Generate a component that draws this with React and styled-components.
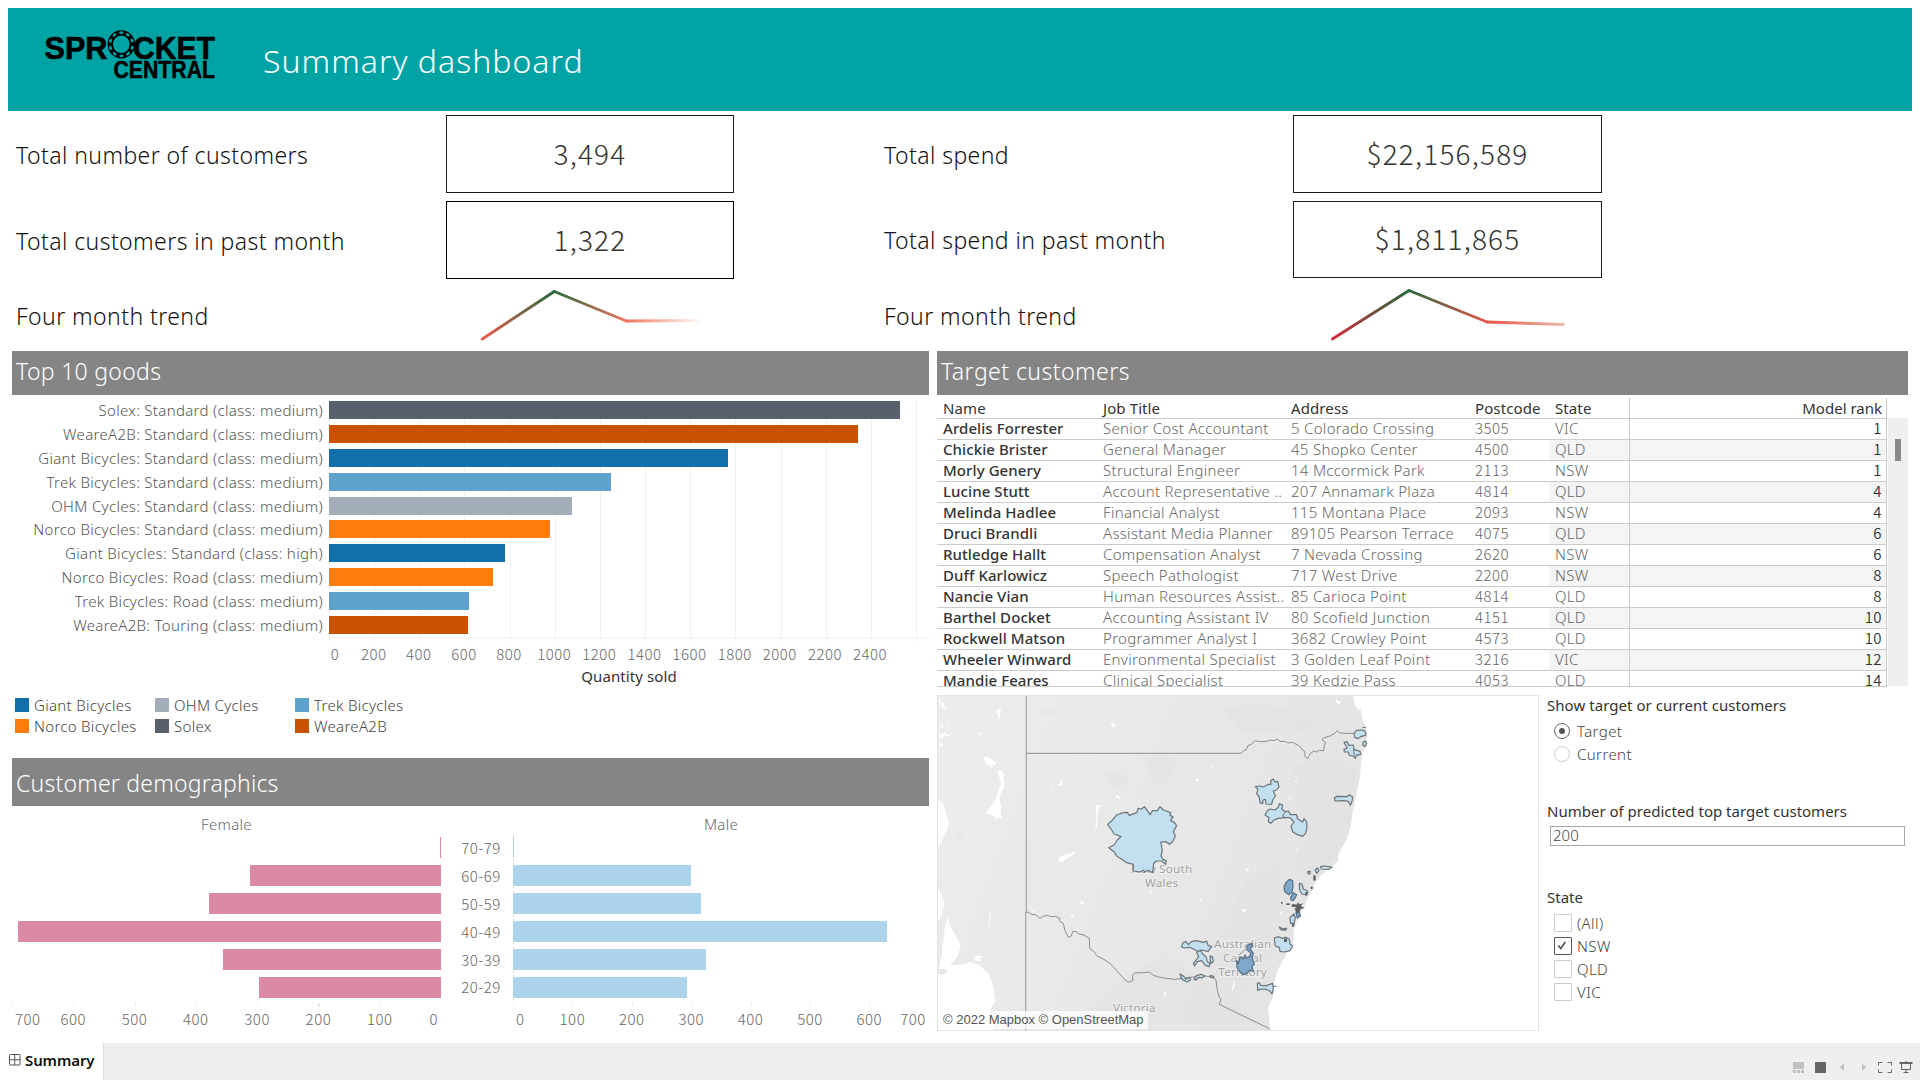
import React from "react";
import styled, { createGlobalStyle } from "styled-components";

const TEXT = `"Noto Sans", "Open Sans", sans-serif`;
const NUM = `"Noto Sans CJK SC", "Noto Sans", sans-serif`;

const GlobalStyle = createGlobalStyle`
  * { box-sizing: border-box; }
  body { margin: 0; background: #fff; font-family: ${TEXT}; }
`;

const Page = styled.div`
  width: 1920px;
  height: 1080px;
  overflow: hidden;
  display: flex;
  flex-direction: column;
  background: #fff;
  font-size: 15px;
  white-space: nowrap;
`;

/* ---------- header ---------- */
const Header = styled.header`
  margin: 8px 8px 0;
  height: 103px;
  flex: none;
  padding-left: 34px;
  display: flex;
  background: #00a3a3;
`;
const LogoSvg = styled.svg`
  width: 180px;
  height: 60px;
  margin-top: 17px;
`;
const Title = styled.h1`
  margin: 30px 0 0 41px;
  font-size: 32px;
  line-height: 46px;
  font-weight: 310;
  letter-spacing: 1px;
  color: #fff;
`;

/* ---------- headline figures ---------- */
const Kpis = styled.section`
  height: 240px;
  flex: none;
  display: flex;
  padding: 4px 0 0 15px;
`;
const KpiGroup = styled.div`
  width: 868px;
  display: grid;
  grid-template-columns: ${p => p.$label}px ${p => p.$box}px;
  grid-template-rows: 78px ${p => p.$second}px 66px;
  row-gap: 8px;
  align-content: start;
`;
const KpiLabel = styled.div`
  align-self: center;
  font-size: 23px;
  line-height: 32px;
  font-weight: 310;
  letter-spacing: 0.42px;
  color: #111;
  padding: ${p => (p.$lift ? 0 : 1)}px 0 ${p => p.$lift || 0}px 1px;
`;
const KpiBox = styled.div`
  border: 1px solid ${p => p.$line};
  display: flex;
  align-items: center;
  justify-content: center;
  padding-bottom: 3px;
  font-family: ${NUM};
  font-size: 28px;
  font-weight: 300;
  letter-spacing: 1.2px;
  line-height: 40px;
  color: #333;
`;
const TrendSvg = styled.svg`
  width: 310px;
  height: 66px;
`;

/* ---------- body ---------- */
const Body = styled.main`
  display: flex;
  gap: 8px;
  padding-left: 12px;
  height: 692px;
  flex: none;
`;
const Left = styled.div`
  width: 917px;
  display: flex;
  flex-direction: column;
`;
const Right = styled.div`
  width: 971px;
  display: flex;
  flex-direction: column;
`;
const SectionBar = styled.h2`
  margin: 0;
  height: ${p => p.$h}px;
  flex: none;
  padding: ${p => p.$drop || 0}px 4px ${p => p.$lift || 0}px;
  display: flex;
  align-items: center;
  background: #858585;
  color: #fff;
  font-size: 23px;
  font-weight: 300;
  letter-spacing: ${p => p.$ls || 0.3}px;
`;

/* goods chart */
const Goods = styled.div`
  display: flex;
  height: 247px;
  padding-top: 3px;
`;
const GoodsLabels = styled.div`
  width: 317px;
  padding: 0 6px 0 0;
`;
const GoodsLabel = styled.div`
  height: 23.88px;
  line-height: 24px;
  text-align: right;
  font-weight: 320;
  letter-spacing: 0.32px;
  color: #555;
`;
const GoodsPlot = styled.div`
  width: 600px;
  height: 244px;
  background: repeating-linear-gradient(90deg, #f1f1f1 0 1px, transparent 1px 45.15px);
`;
const GoodsBars = styled.div`
  height: 240px;
  padding-top: 3px;
  border-bottom: 1px solid #f1f1f1;
`;
const GoodsSlot = styled.div`
  height: 23.88px;
`;
const GoodsBar = styled.div`
  height: 18px;
  background: ${p => p.$c};
`;
const GoodsAxis = styled.div`
  display: flex;
  margin-left: 294px;
  height: 24px;
`;
const axisText = `
  font-family: ${NUM};
  font-size: 15px;
  font-weight: 320;
  letter-spacing: 0.5px;
  color: #666;
`;
const GoodsTick = styled.span`
  ${axisText}
  width: 45.13px;
  line-height: 23px;
  text-align: center;
  &:first-child { padding-left: 13px; }
`;
const AxisTitle = styled.div`
  margin: 0 0 0 317px;
  text-align: center;
  line-height: 20px;
  letter-spacing: 0.1px;
  color: #333;
`;
const Legend = styled.div`
  display: grid;
  grid-template-columns: 140px 140px 140px;
  grid-auto-rows: 21px;
  padding: 8px 0 0 3px;
  height: 72px;
`;
const LegendItem = styled.div`
  display: flex;
  align-items: center;
  gap: 5px;
  font-weight: 320;
  letter-spacing: 0.3px;
  color: #444;
  line-height: 20px;
`;
const Swatch = styled.i`
  width: 14px;
  height: 14px;
  background: ${p => p.$c};
`;

/* demographics */
const Demo = styled.div`
  display: grid;
  grid-template-columns: 429px 72px 416px;
  grid-template-rows: 27px 169px 6px 26px;
`;
const DemoHead = styled.div`
  text-align: center;
  line-height: 37px;
  font-weight: 320;
  letter-spacing: 0.3px;
  color: #666;
`;
const DemoBars = styled.div`
  display: flex;
  flex-direction: column;
  padding-top: 4px;
  gap: 7px;
  align-items: ${p => (p.$side === "left" ? "flex-end" : "flex-start")};
  background: ${p =>
    p.$side === "left"
      ? "none"
      : "repeating-linear-gradient(180deg, #ccc 0 1px, transparent 1px 4px) 0 2px / 1px 100% no-repeat"};
`;
const DemoBar = styled.div`
  height: 21px;
  background: ${p => (p.$side === "left" ? "#da8aa7" : "#aed3ec")};
`;
const Ages = styled.div`
  padding-top: 2px;
`;
const Age = styled.div`
  ${axisText}
  height: 27.9px;
  line-height: 26px;
  padding-left: 8px;
  text-align: center;
`;
const DemoTicks = styled.div`
  height: 4px;
  margin-top: 1px;
  background: repeating-linear-gradient(90deg, #ececec 0 1px, transparent 1px ${p => p.$pitch}px);
`;
const DemoAxis = styled.div`
  display: flex;
`;
const DemoTick = styled.span`
  ${axisText}
  width: ${p => p.$pitch}px;
  line-height: 21px;
  text-align: center;
  &:first-child { width: ${p => p.$pitch / 2}px; text-align: left; padding-left: 3px; }
  &:last-child { width: ${p => p.$pitch / 2}px; text-align: right; padding-right: 3px; direction: rtl; }
`;

/* customers table */
const TableWrap = styled.div`
  display: flex;
  height: 292px;
  padding-top: 3px;
  flex: none;
`;
const Table = styled.div`
  width: 950px;
  height: 289px;
  overflow: hidden;
  border-right: 1px solid #cbcbcb;
  border-bottom: 1px solid #cbcbcb;
`;
const TableRow = styled.div`
  display: grid;
  grid-template-columns: 160px 188px 184px 80px 80px 1fr;
  height: 21px;
  border-bottom: 1px solid #cbcbcb;
  line-height: 18px;
`;
const HeadRow = styled(TableRow)`
  line-height: 20px;
`;
const Cell = styled.div`
  padding-left: 6px;
  font-weight: 320;
  letter-spacing: 0.3px;
  color: #666;
  overflow: hidden;
  background: ${p => (p.$shade ? "#f4f4f4" : "none")};
`;
const NameCell = styled(Cell)`
  font-weight: 490;
  color: #333;
  letter-spacing: 0.08px;
`;
const CodeCell = styled(Cell)`
  font-family: ${NUM};
  letter-spacing: 0.5px;
`;
const RankCell = styled(Cell)`
  font-family: ${p => (p.$head ? TEXT : NUM)};
  font-weight: ${p => (p.$head ? 400 : 340)};
  letter-spacing: ${p => (p.$head ? 0 : 0.4)}px;
  border-left: 1px solid #cbcbcb;
  padding-right: 4px;
  text-align: right;
  color: #333;
`;
const HeadCell = styled(Cell)`
  font-weight: 400;
  letter-spacing: 0.1px;
  color: #333;
`;
const Scroll = styled.div`
  width: 20px;
  height: 268px;
  margin: 20px 0 0 1px;
  padding: 21px 7px 0;
  background: #efefef;
`;
const Thumb = styled.div`
  height: 22px;
  width: 6px;
  background: #888;
`;

/* map + filters */
const Lower = styled.div`
  display: flex;
  padding-top: 8px;
`;
const MapFrame = styled.div`
  position: relative;
  width: 602px;
  height: 336px;
  border: 1px solid #e3e3e3;
  overflow: hidden;
`;
const MapSvg = styled.svg`
  display: block;
  margin: -1px;
`;
const Attribution = styled.div`
  position: absolute;
  left: 2px;
  bottom: 1px;
  width: 208px;
  height: 18px;
  padding-left: 3px;
  background: rgba(255, 255, 255, 0.75);
  font: 13px/18px "Liberation Sans", Arial, sans-serif;
  letter-spacing: 0;
  color: #555;
`;
const Filters = styled.div`
  width: 369px;
  padding-left: 8px;
`;
const FilterTitle = styled.div`
  line-height: 20px;
  letter-spacing: ${p => p.$ls || 0}px;
  color: #333;
  margin-top: ${p => p.$top}px;
`;
const Option = styled.label`
  display: flex;
  align-items: center;
  gap: 5px;
  height: 23px;
  padding-left: 7px;
  font-weight: 320;
  letter-spacing: 0.4px;
  color: #444;
`;
const Radio = styled.span`
  width: 16px;
  height: 16px;
  margin-right: 2px;
  border: 1px solid ${p => (p.$on ? "#666" : "#ccc")};
  border-radius: 50%;
  display: flex;
  align-items: center;
  justify-content: center;
  &::after {
    content: "";
    width: 6px;
    height: 6px;
    border-radius: 50%;
    background: ${p => (p.$on ? "#555" : "transparent")};
  }
`;
const Check = styled.span`
  width: 18px;
  height: 18px;
  border: 1px solid ${p => (p.$on ? "#555" : "#ccc")};
  border-radius: 1px;
  display: flex;
`;
const OptionList = styled.div`
  padding-top: 4px;
`;
const Field = styled.div`
  width: 355px;
  height: 20px;
  margin: 5px 0 0 3px;
  padding-left: 2px;
  border: 1px solid #a6a6a6;
  font-weight: 320;
  line-height: 17px;
  color: #444;
`;

/* tab strip */
const Footer = styled.footer`
  height: 37px;
  flex: none;
  display: flex;
  justify-content: space-between;
  background: #efefef;
`;
const Tab = styled.div`
  width: 104px;
  background: #fff;
  border-right: 1px solid #dcdcdc;
  display: flex;
  gap: 4px;
  padding: 0 0 3px 9px;
  align-items: center;
  font-weight: 640;
  font-size: 15px;
  letter-spacing: -0.1px;
  line-height: 18px;
  color: #111;
`;
const FooterIcons = styled.svg`
  width: 130px;
  height: 37px;
`;

/* ---------- data ---------- */
const C = {
  giant: "#1170aa", norco: "#fc7d0b", ohm: "#a3acb9",
  solex: "#57606c", trek: "#5fa2ce", weare: "#c85200",
};
const goods = [
  ["Solex: Standard (class: medium)", 571, C.solex],
  ["WeareA2B: Standard (class: medium)", 529, C.weare],
  ["Giant Bicycles: Standard (class: medium)", 399, C.giant],
  ["Trek Bicycles: Standard (class: medium)", 282, C.trek],
  ["OHM Cycles: Standard (class: medium)", 243, C.ohm],
  ["Norco Bicycles: Standard (class: medium)", 221, C.norco],
  ["Giant Bicycles: Standard (class: high)", 176, C.giant],
  ["Norco Bicycles: Road (class: medium)", 164, C.norco],
  ["Trek Bicycles: Road (class: medium)", 140, C.trek],
  ["WeareA2B: Touring (class: medium)", 139, C.weare],
];
const legend = [
  ["Giant Bicycles", C.giant], ["OHM Cycles", C.ohm], ["Trek Bicycles", C.trek],
  ["Norco Bicycles", C.norco], ["Solex", C.solex], ["WeareA2B", C.weare],
];
const ages = [
  ["70-79", 1, 1], ["60-69", 191, 178], ["50-59", 232, 188],
  ["40-49", 423, 374], ["30-39", 218, 193], ["20-29", 182, 174],
];
const customers = [
  ["Ardelis Forrester", "Senior Cost Accountant", "5 Colorado Crossing", "3505", "VIC", 1],
  ["Chickie Brister", "General Manager", "45 Shopko Center", "4500", "QLD", 1],
  ["Morly Genery", "Structural Engineer", "14 Mccormick Park", "2113", "NSW", 1],
  ["Lucine Stutt", "Account Representative ..", "207 Annamark Plaza", "4814", "QLD", 4],
  ["Melinda Hadlee", "Financial Analyst", "115 Montana Place", "2093", "NSW", 4],
  ["Druci Brandli", "Assistant Media Planner", "89105 Pearson Terrace", "4075", "QLD", 6],
  ["Rutledge Hallt", "Compensation Analyst", "7 Nevada Crossing", "2620", "NSW", 6],
  ["Duff Karlowicz", "Speech Pathologist", "717 West Drive", "2200", "NSW", 8],
  ["Nancie Vian", "Human Resources Assist..", "85 Carioca Point", "4814", "QLD", 8],
  ["Barthel Docket", "Accounting Assistant IV", "80 Scofield Junction", "4151", "QLD", 10],
  ["Rockwell Matson", "Programmer Analyst I", "3682 Crowley Point", "4573", "QLD", 10],
  ["Wheeler Winward", "Environmental Specialist", "3 Golden Leaf Point", "3216", "VIC", 12],
  ["Mandie Feares", "Clinical Specialist", "39 Kedzie Pass", "4053", "QLD", 14],
];

/* ---------- drawings ---------- */
function Logo() {
  const n = 10;
  const at = (i, r) => {
    const a = (i / n) * Math.PI * 2 + 0.3;
    return [79.3 + Math.cos(a) * r, 19.3 + Math.sin(a) * r * 1.03];
  };
  const idx = Array.from({ length: n }, (_, i) => i);
  return (
    <LogoSvg viewBox="0 0 180 60" fontFamily="Liberation Sans, Arial, sans-serif" fontWeight="bold">
      <text x="2.5" y="33.5" fontSize="31" textLength="63" lengthAdjust="spacingAndGlyphs" stroke="#000" strokeWidth=".6">SPR</text>
      <text x="91" y="33.5" fontSize="31" textLength="82" lengthAdjust="spacingAndGlyphs" stroke="#000" strokeWidth=".6">CKET</text>
      <text x="71.5" y="52.5" fontSize="23.5" textLength="101.5" lengthAdjust="spacingAndGlyphs" stroke="#000" strokeWidth=".5">CENTRAL</text>
      <ellipse cx="79.3" cy="19.3" rx="11" ry="11.4" fill="none" stroke="#000" strokeWidth="5.4" />
      {idx.map(i => {
        const [x, y] = at(i, 11.3);
        return (
          <ellipse key={i} cx={x} cy={y} rx="1.4" ry="2.1" fill="#00a3a3"
            transform={`rotate(${(i / n) * 360 + 17} ${x} ${y})`} />
        );
      })}
    </LogoSvg>
  );
}

function Trend({ id, points, colors }) {
  return (
    <TrendSvg viewBox="0 0 310 66">
      <defs>
        {[0, 1, 2].map(i => (
          <linearGradient key={i} id={id + i} gradientUnits="userSpaceOnUse"
            x1={points[i][0]} y1={points[i][1]} x2={points[i + 1][0]} y2={points[i + 1][1]}>
            <stop offset="0" stopColor={colors[i]} />
            <stop offset="1" stopColor={colors[i + 1]} />
          </linearGradient>
        ))}
      </defs>
      {[0, 1, 2].map(i => (
        <line key={i} x1={points[i][0]} y1={points[i][1]} x2={points[i + 1][0]} y2={points[i + 1][1]}
          stroke={`url(#${id + i})`} strokeWidth="2.9" strokeLinecap={i === 2 ? "butt" : "round"} />
      ))}
    </TrendSvg>
  );
}

const lightRegions = [
  "533,403 548,390 560,375 580,368 592,367 598,376 620,368 625,355 635,357 643,350 652,362 660,374 668,362 682,362 690,350 700,360 722,368 720,376 729,380 722,392 733,397 740,407 730,425 736,437 728,455 718,463 708,455 692,456 697,480 693,498 699,508 708,512 707,523 695,513 680,513 671,520 668,548 655,541 645,546 640,541 630,546 610,543 610,523 590,518 575,508 560,498 552,485 536,473 552,465 562,450 573,440 553,432 545,420",
  "976,290 990,288 1000,291 1015,283 1023,283 1022,272 1030,267 1035,276 1043,274 1047,290 1040,300 1030,303 1036,318 1028,330 1025,343 1008,342 1006,328 999,330 998,341 990,338 988,322 980,310 984,298",
  "1005,375 1012,362 1020,357 1035,360 1045,352 1048,341 1058,345 1055,358 1066,365 1075,363 1082,374 1100,374 1102,386 1118,396 1122,386 1130,396 1131,412 1127,430 1118,439 1100,433 1088,425 1083,408 1092,396 1080,383 1062,383 1045,385 1032,390 1022,400 1015,395 1017,383",
  "1272,130 1280,121 1300,120 1308,128 1306,136 1292,140 1285,146 1274,142",
  "1299,157 1305,153 1310,160 1306,169 1299,166",
  "1242,157 1252,155 1256,166 1270,165 1272,178 1290,184 1292,193 1280,196 1276,205 1270,198 1258,196 1255,186 1243,186 1242,178 1252,174",
  "1213,324 1220,319 1250,320 1258,314 1268,322 1266,334 1261,346 1255,334 1240,332 1216,333",
  "1172,530 1182,528 1207,531 1196,538 1174,537",
  "1155,540 1163,534 1167,542 1160,550",
  "1133,545 1141,544 1139,553 1133,550",
  "1108,580 1116,582 1120,597 1134,604 1128,615 1116,612 1109,600",
  "1080,683 1092,672 1096,684 1092,700 1082,700",
  "1048,711 1058,716 1070,715 1066,721 1052,719",
  "1033,744 1045,740 1055,745 1068,742 1078,748 1080,762 1088,768 1080,782 1062,786 1050,784 1048,772 1036,768",
  "982,880 988,878 992,886 1008,887 1028,880 1030,898 1026,912 1020,904 1006,897 990,898 983,901",
  "754,770 760,757 768,755 775,764 784,755 800,752 820,757 830,753 834,766 845,770 834,784 812,780 806,786 796,780 780,772 762,774",
  "800,786 812,782 818,792 828,800 832,815 840,820 838,830 826,826 815,812 802,815 794,828 790,820 800,808 806,800",
  "840,798 847,800 850,815 842,820",
  "750,852 760,858 768,868 778,862 782,870 770,876 756,868",
  "792,868 800,856 815,853 824,858 816,864 806,862 798,870",
  "840,857 850,858 852,864 842,862",
];
const darkRegions = [
  "1062,590 1068,578 1078,568 1088,572 1089,590 1086,606 1076,614 1064,604",
  "1082,622 1090,608 1100,614 1096,622 1090,632 1083,630",
  "920,812 925,820 930,802 940,806 945,795 948,805 958,800 963,790 950,778 952,766 966,760 968,768 960,776 970,790 966,806 973,822 966,830 970,844 958,840 952,850 940,854 930,846 921,834",
  "1098,668 1108,668 1112,678 1102,684",
];
const lakes = [
  "195,60 201,64 206,54 214,62 209,70 212,78 206,88 203,74",
  "160,202 172,201 184,206 198,218 192,228 186,222 188,236 176,224 168,222",
  "202,242 214,240 221,252 222,290 212,312 208,324 214,352 211,370 218,388 204,380 198,390 190,378 168,370 176,358 186,345 198,325 204,302 214,285 208,262",
  "22,330 36,336 44,350 48,376 57,400 52,418 40,440 30,466 22,468",
  "22,600 30,601 38,622 42,640 38,664 30,688 22,692",
  "22,880 24,850 36,790 44,715 52,680 62,708 76,736 92,768 82,800 60,826 88,825 120,816 146,825 172,846 188,878 196,932 180,962 190,1020 22,1020",
  "130,806 138,798 158,797 150,806 156,814 138,812",
  "496,346 520,346 506,352 503,375 501,415 496,412 499,380",
  "385,515 388,504 402,494 420,492 434,484 436,492 420,500 408,506 400,514",
  "556,318 562,314 574,328 568,326",
  "542,100 552,98 556,114 548,110",
  "360,300 366,295 366,302", "380,286 388,282 396,270 396,288",
  "796,266 808,270 802,276", "1092,272 1102,272 1098,278",
  "946,540 958,528 952,540 960,550", "448,630 462,638 456,646",
  "932,660 948,656 944,668", "700,908 708,906 706,924",
  "906,900 912,866 914,880 909,905", "420,682 432,672 428,684",
  "302,665 315,662 310,668", "840,227 848,229 844,233", "1050,672 1058,658 1056,675",
  "808,628 815,628 812,636", "660,600 668,603 662,608", "1078,322 1082,325 1078,334",
  "25,30 32,26 33,38 44,40 40,46 54,60 46,58 34,48", "25,95 34,104 42,108 36,112", "52,97 60,100 56,104",
  "25,128 36,132 46,126 52,134 68,128 56,138 44,136 32,146", "145,128 156,131 148,135",
  "66,226 72,226 70,231", "28,152 32,160 38,160 36,172 30,166",
  "1216,20 1222,32 1232,36 1228,44 1218,36",
  "1098,478 1104,478 1100,484", "1308,222 1322,218 1318,232",
];
const terrain = [
  "330,60 350,50 375,58 372,80 340,82", "640,200 680,190 740,205 730,260 690,290 660,260",
  "70,450 90,410 100,470", "520,250 560,240 600,270 560,300",
  "880,60 960,40 1100,60 1180,110 1080,130 930,120",
  "1080,230 1180,200 1280,240 1260,420 1220,500 1150,560 1090,540 1140,420 1100,330",
  "950,560 1040,520 1060,640 1040,760 980,860 900,960 830,830 880,720",
  "560,880 700,800 860,900 1000,1000 600,1000 480,960",
];
const border = "289,190 933,190 940,183 948,180 954,167 964,163 975,152 990,155 1010,154 1022,150 1032,152 1043,147 1050,155 1066,154 1074,159 1088,157 1104,166 1112,171 1118,181 1124,184 1125,200 1133,206 1140,191 1152,183 1160,186 1168,181 1182,182 1182,170 1187,158 1176,150 1180,144 1200,138 1214,130 1222,122 1228,128 1242,130 1270,130";
const river = "286,668 296,666 302,672 318,675 330,685 340,679 352,676 362,680 376,679 388,684 390,695 400,700 405,722 415,742 424,738 428,725 438,724 446,732 462,735 478,745 479,775 492,785 500,797 522,808 542,822 560,842 578,862 595,877 608,872 608,855 614,849 640,848 658,846 670,856 690,862 710,865 735,868 755,865 780,862 800,860 820,857 850,862 858,870 861,895 867,920 873,928 868,943 1018,1016";

function MapDrawing() {
  return (
    <MapSvg width="602" height="336" viewBox="0 0 602 336">
      <defs>
        <linearGradient id="land" x1="0" y1="0" x2="1" y2="0.3">
          <stop offset="0" stopColor="#ededed" />
          <stop offset="1" stopColor="#e4e4e4" />
        </linearGradient>
      </defs>
      <g transform="translate(-7 -5) scale(0.33333)">
        <path fill="url(#land)" d="M20,12H1268L1274,40L1286,66L1290,50L1298,90L1308,110L1311,135L1311,165L1298,190L1294,215L1290,260L1280,310L1268,365L1262,410L1250,448L1238,470L1226,490L1224,514L1204,530L1174,556L1158,574L1146,600L1134,622L1124,650L1104,684L1092,718L1090,760L1068,795L1042,842L1033,880L1028,925L1014,952L1018,990L1020,1022H20Z" />
        <g fill="#dedede" opacity="0.22">{terrain.map((p, i) => <polygon key={i} points={p} />)}</g>
        <g fill="#fff">{lakes.map((p, i) => <polygon key={i} points={p} />)}</g>
        <polygon points="22,838 44,836 54,846 36,854 22,850" fill="#e8e8e8" />
        <polyline points="182,670 176,712" stroke="#fff" strokeWidth="3" fill="none" />
        <g fill="none" stroke="#8d8d8d" strokeWidth="3">
          <polyline points="289,15 289,660 287,668 287,1022" stroke="#aaa" strokeWidth="4" />
          <polyline points={border} />
          <polyline points={river} />
        </g>
        <g fontFamily="Noto Sans, sans-serif" fontSize="35" fill="#a2a2a2" textAnchor="middle" stroke="#efefef" strokeWidth="6" paintOrder="stroke" letterSpacing="0.6">
          <text x="695" y="550">New South</text>
          <text x="695" y="591">Wales</text>
          <text x="938" y="774">Australian</text>
          <text x="938" y="816">Capital</text>
          <text x="938" y="858">Territory</text>
          <text x="613" y="967">Victoria</text>
        </g>
        <g strokeWidth="3.6" stroke="#6c7478" strokeLinejoin="round">
          <g fill="#bfdff0" fillOpacity="0.94">{lightRegions.map((p, i) => <polygon key={i} points={p} />)}</g>
          <g fill="#6f9dc6" fillOpacity="0.86" stroke="#557087">{darkRegions.map((p, i) => <polygon key={i} points={p} />)}</g>
        </g>
        <polyline points="926,796 944,780 956,778" stroke="#8d8d8d" strokeWidth="3" fill="none" />
        <g fill="#5c6063">
          <polygon points="1084,645 1090,642 1100,644 1104,637 1108,643 1120,640 1112,648 1124,654 1112,657 1110,664 1106,668 1098,666 1094,656 1100,652 1086,650" />
          <rect x="1053" y="636" width="5" height="5" /><rect x="1069" y="640" width="10" height="5" />
          <rect x="1150" y="556" width="7" height="16" /><rect x="1142" y="590" width="6" height="8" />
          <rect x="1126" y="606" width="7" height="10" /><rect x="1086" y="700" width="7" height="10" />
          <rect x="1062" y="746" width="9" height="10" />
        </g>
        <g fill="none" stroke="#6c7478" strokeWidth="3">
          <polyline points="1066,366 1058,378 1066,384" /><polyline points="1270,178 1274,196" />
          <polyline points="1298,112 1308,113" /><polyline points="1030,889 1040,889" />
        </g>
      </g>
    </MapSvg>
  );
}

const femaleTicks = ["700", "600", "500", "400", "300", "200", "100", "0"];

export default function App() {
  return (
    <Page>
      <GlobalStyle />
      <Header>
        <Logo />
        <Title>Summary dashboard</Title>
      </Header>

      <Kpis>
        <KpiGroup $label={431} $box={288} $second={78}>
          <KpiLabel>Total number of customers</KpiLabel>
          <KpiBox $line="#1c1c1c">3,494</KpiBox>
          <KpiLabel>Total customers in past month</KpiLabel>
          <KpiBox $line="#000">1,322</KpiBox>
          <KpiLabel $lift={8}>Four month trend</KpiLabel>
          <Trend id="cust" points={[[36.3, 52], [108.3, 4.5], [180.3, 34], [253.3, 33.5]]}
            colors={["#ec5a50", "#26693b", "#f4735e", "#fdfaf7"]} />
        </KpiGroup>
        <KpiGroup $label={410} $box={309} $second={77}>
          <KpiLabel>Total spend</KpiLabel>
          <KpiBox $line="#1c1c1c">$22,156,589</KpiBox>
          <KpiLabel>Total spend in past month</KpiLabel>
          <KpiBox $line="#1c1c1c">$1,811,865</KpiBox>
          <KpiLabel $lift={7}>Four month trend</KpiLabel>
          <Trend id="spend" points={[[39.4, 53], [116, 4.5], [194, 36], [271.5, 38.5]]}
            colors={["#d3293d", "#26693b", "#e9544a", "#e9bba9"]} />
        </KpiGroup>
      </Kpis>

      <Body>
        <Left>
          <SectionBar $h={44} $lift={4}>Top 10 goods</SectionBar>
          <Goods>
            <GoodsLabels>{goods.map(g => <GoodsLabel key={g[0]}>{g[0]}</GoodsLabel>)}</GoodsLabels>
            <GoodsPlot>
              <GoodsBars>
                {goods.map(g => (
                  <GoodsSlot key={g[0]}><GoodsBar $c={g[2]} style={{ width: g[1] }} /></GoodsSlot>
                ))}
              </GoodsBars>
            </GoodsPlot>
          </Goods>
          <GoodsAxis>
            {Array.from({ length: 13 }, (_, i) => <GoodsTick key={i}>{i * 200}</GoodsTick>)}
          </GoodsAxis>
          <AxisTitle>Quantity sold</AxisTitle>
          <Legend>
            {legend.map(([name, c]) => <LegendItem key={name}><Swatch $c={c} />{name}</LegendItem>)}
          </Legend>
          <SectionBar $h={48} $drop={2} $ls={0.2}>Customer demographics</SectionBar>
          <Demo>
            <DemoHead>Female</DemoHead><span /><DemoHead>Male</DemoHead>
            <DemoBars $side="left">
              {ages.map(a => <DemoBar key={a[0]} $side="left" style={{ width: a[1] }} />)}
            </DemoBars>
            <Ages>{ages.map(a => <Age key={a[0]}>{a[0]}</Age>)}</Ages>
            <DemoBars $side="right">
              {ages.map(a => <DemoBar key={a[0]} $side="right" style={{ width: a[2] }} />)}
            </DemoBars>
            <DemoTicks $pitch={61.3} /><span /><DemoTicks $pitch={59.4} />
            <DemoAxis>{femaleTicks.map(t => <DemoTick key={t} $pitch={61.3}>{t}</DemoTick>)}</DemoAxis>
            <span />
            <DemoAxis>{[...femaleTicks].reverse().map(t => <DemoTick key={t} $pitch={59.4}>{t}</DemoTick>)}</DemoAxis>
          </Demo>
        </Left>

        <Right>
          <SectionBar $h={44} $lift={4} $ls={0.45}>Target customers</SectionBar>
          <TableWrap>
            <Table>
              <HeadRow>
                <HeadCell>Name</HeadCell><HeadCell>Job Title</HeadCell><HeadCell>Address</HeadCell>
                <HeadCell>Postcode</HeadCell><HeadCell>State</HeadCell><RankCell $head>Model rank</RankCell>
              </HeadRow>
              {customers.map((c, i) => (
                <TableRow key={c[0]}>
                  <NameCell>{c[0]}</NameCell><Cell>{c[1]}</Cell><Cell>{c[2]}</Cell>
                  <CodeCell>{c[3]}</CodeCell><Cell $shade={i % 2 === 1}>{c[4]}</Cell>
                  <RankCell $shade={i % 2 === 1}>{c[5]}</RankCell>
                </TableRow>
              ))}
            </Table>
            <Scroll><Thumb /></Scroll>
          </TableWrap>
          <Lower>
            <MapFrame>
              <MapDrawing />
              <Attribution>© 2022 Mapbox © OpenStreetMap</Attribution>
            </MapFrame>
            <Filters>
              <FilterTitle $top={0} $ls={0.05}>Show target or current customers</FilterTitle>
              <OptionList>
                <Option><Radio $on />Target</Option>
                <Option><Radio />Current</Option>
              </OptionList>
              <FilterTitle $top={36}>Number of predicted top target customers</FilterTitle>
              <Field>200</Field>
              <FilterTitle $top={41}>State</FilterTitle>
              <OptionList>
                {["(All)", "NSW", "QLD", "VIC"].map(s => (
                  <Option key={s}>
                    <Check $on={s === "NSW"}>
                      {s === "NSW" && (
                        <svg width="16" height="16" viewBox="0 0 16 16">
                          <path d="M3.2 7.6l2.6 3L10.2 4" fill="none" stroke="#444" strokeWidth="1.5" />
                        </svg>
                      )}
                    </Check>
                    {s}
                  </Option>
                ))}
              </OptionList>
            </Filters>
          </Lower>
        </Right>
      </Body>

      <Footer>
        <Tab>
          <svg width="12" height="12" viewBox="0 0 12 12" fill="none" stroke="#555">
            <rect x="0.5" y="0.5" width="10.5" height="10.5" rx="0.8" />
            <path d="M5.75 0.5v10.5M0.5 5.75h10.5" />
          </svg>
          Summary
        </Tab>
        <FooterIcons viewBox="0 0 130 37">
          <g fill="#c1c1c1">
            <rect x="3" y="19" width="11" height="7" />
            <rect x="3" y="27" width="3" height="3" /><rect x="7" y="27" width="3" height="3" /><rect x="11" y="27" width="3" height="3" />
            <path d="M54 20.5v7.5l-4.2-3.7z" /><path d="M72 20.5v7.5l4.2-3.7z" />
          </g>
          <rect x="25" y="19" width="11" height="11" fill="#666" />
          <g fill="none" stroke="#666">
            <path d="M88.5 22.5v-3h4M97.5 19.5h4v3M101.5 26.5v3h-4M92.5 29.5h-4v-3" />
            <path d="M111.5 20.5v6h9v-6M116 18v2M116 26.5v3M113.5 29.5h5" />
            <path d="M109.5 20h13" strokeWidth="2" />
          </g>
        </FooterIcons>
      </Footer>
    </Page>
  );
}
